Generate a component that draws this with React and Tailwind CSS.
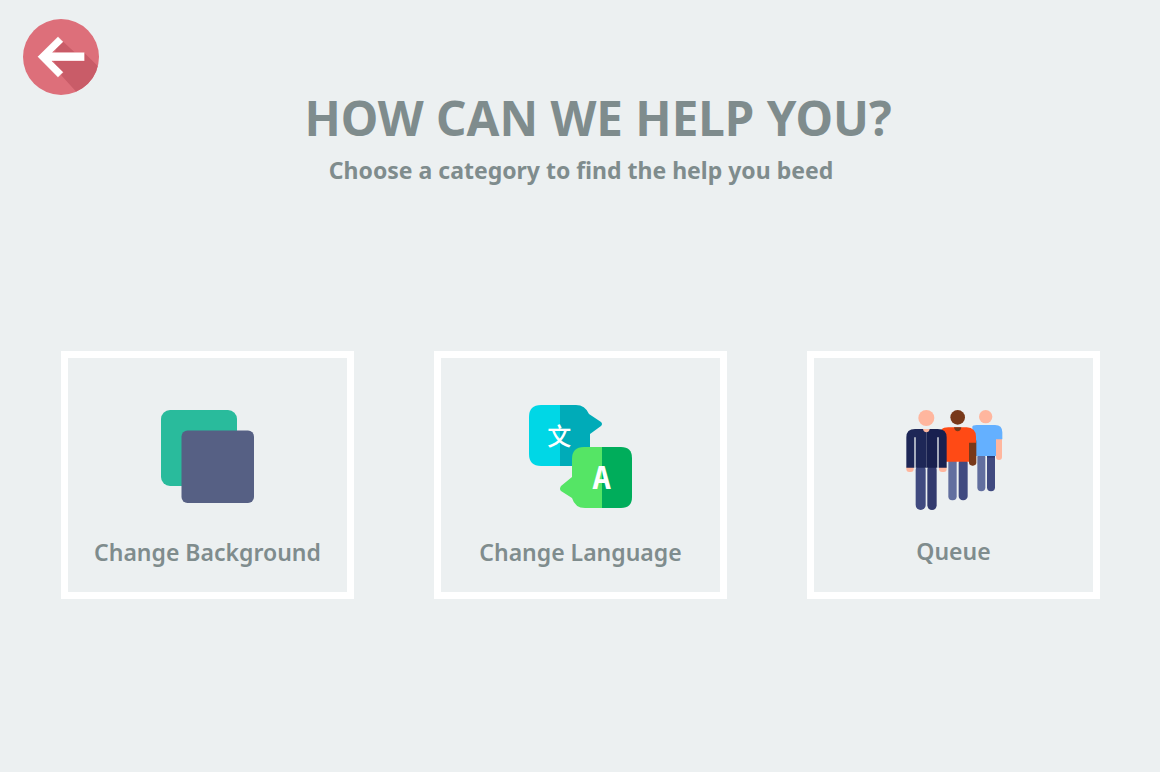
import React from 'react';

const BackIcon = () => (
  <svg viewBox="40 28 226 226" className="w-[76px] h-[76px]">
    <defs>
      <clipPath id="backCircle">
        <circle cx="153" cy="141" r="113" />
      </clipPath>
    </defs>
    <circle cx="153" cy="141" r="113" fill="#dd6f7a" />
    <polygon
      clipPath="url(#backCircle)"
      points="146,83 195,128 222,128 300,205 240,290 155,197 130,150"
      fill="#c95c68"
    />
    <polygon
      points="83,140 144,80 160,96 128,127 223,127 223,153 126,153 160,186 144,202"
      fill="#ffffff"
      stroke="#d9505e"
      strokeWidth="1"
    />
  </svg>
);

const BackgroundIcon = () => (
  <svg viewBox="0 0 93 93" className="w-[93px] h-[93px]">
    <rect x="0" y="0" width="76" height="76" rx="9" fill="#29bb9c" />
    <rect x="20.5" y="20.5" width="72.5" height="72.5" rx="6" fill="#566084" />
  </svg>
);

const TranslateIcon = () => (
  <svg viewBox="0 0 103 103" className="w-[103px] h-[103px]">
    <path d="M31 0H12Q0 0 0 12V49Q0 61 12 61H31Z" fill="#00d7e6" />
    <path d="M31 0H47Q56 0 60 9L72 17Q74 19 72 21L61 29V61H31Z" fill="#00abb8" />
    <path d="M73 42H55Q43 42 43 54V72L32 81Q30 84 32 86L43 93Q46 103 56 103H73Z" fill="#55e565" />
    <path d="M73 42H92Q103 42 103 53V92Q103 103 92 103H73Z" fill="#00ad5b" />
    <text x="30.3" y="40" textAnchor="middle" fontSize="24" fontWeight="500" fill="#ffffff" fontFamily="'Noto Sans CJK SC', sans-serif">文</text>
    <text x="72.7" y="84" textAnchor="middle" fontSize="32" fontWeight="700" fill="#ffffff" fontFamily="'DejaVu Sans Mono', monospace">A</text>
  </svg>
);

const PeopleIcon = () => (
  <svg viewBox="0 0 345 345" className="w-[115px] h-[115px]">
    {/* right person */}
    <circle cx="272" cy="50" r="20" fill="#ffb69e" />
    <rect x="303" y="110" width="18" height="70" rx="9" fill="#ffb69e" />
    <rect x="247" y="160" width="24" height="114" rx="12" fill="#626f9f" />
    <rect x="276" y="160" width="24" height="114" rx="12" fill="#404a80" />
    <path d="M232 80Q232 75 245 75H300Q322 75 322 97V118H303V168H232Z" fill="#64b0ff" />
    <rect x="276" y="168" width="24" height="5" fill="#2f3a70" />
    {/* middle person */}
    <rect x="160" y="175" width="25" height="126" rx="12" fill="#626f9f" />
    <rect x="191" y="175" width="27" height="126" rx="13" fill="#404a80" />
    <rect x="222" y="115" width="22" height="82" rx="10" fill="#78391a" />
    <circle cx="188" cy="52" r="22" fill="#78391a" />
    <path d="M140 88Q145 82 160 82H215Q243 84 243 110V128H222V185H140Z" fill="#ff4a15" />
    <path d="M177 82H199Q197 94 188 94Q179 94 177 82Z" fill="#78391a" />
    {/* left person */}
    <circle cx="94" cy="54" r="24" fill="#ffb69e" />
    <rect x="62" y="195" width="30" height="135" rx="15" fill="#404a80" />
    <rect x="97" y="195" width="28" height="135" rx="14" fill="#323a6e" />
    <rect x="34" y="195" width="22" height="21" rx="9" fill="#ffb69e" />
    <rect x="132" y="195" width="23" height="21" rx="9" fill="#ffb69e" />
    <path d="M34 112Q34 87 60 87H94V203H62V112H58V203H34Z" fill="#1e2757" />
    <path d="M94 87H128Q155 87 155 112V203H131V112H127V203H94Z" fill="#18204f" />
    <path d="M84 87H104Q102 97 94 97Q86 97 84 87Z" fill="#ffb69e" />
  </svg>
);

const categories = [
  { label: 'Change Background', icon: <BackgroundIcon />, iconClass: 'pt-[52px] pr-px', areaClass: 'h-[179px]' },
  { label: 'Change Language', icon: <TranslateIcon />, iconClass: 'pt-[47px] pr-px', areaClass: 'h-[179px]' },
  { label: 'Queue', icon: <PeopleIcon />, iconClass: 'pt-[42px] pr-[2px]', areaClass: 'h-[178px]' },
];

const CategoryCard = ({ category }) => (
  <div className="w-[293px] h-[248px] border-[7px] border-white flex flex-col items-center">
    <div className={`${category.areaClass} ${category.iconClass} shrink-0 flex justify-center`}>{category.icon}</div>
    <p className="text-[23px] leading-[30px] font-semibold text-[#7f8c8d] whitespace-nowrap">{category.label}</p>
  </div>
);

export default function App() {
  return (
    <div className="w-[1160px] h-[772px] overflow-hidden bg-[#ecf0f1] font-['Noto_Sans',sans-serif]">
      <div className="pt-[19px] pl-[23px]">
        <BackIcon />
      </div>
      <h1 className="pl-[36px] text-center text-[47.5px] leading-[46px] font-bold text-[#7f8c8d] whitespace-nowrap">
        HOW CAN WE HELP YOU?
      </h1>
      <p className="mt-[12px] w-[1162px] text-center text-[23px] leading-[34px] font-bold text-[#7f8c8d] whitespace-nowrap">
        Choose a category to find the help you beed
      </p>
      <div className="mt-[164px] pl-[61px] flex gap-[80px]">
        {categories.map((category) => (
          <CategoryCard key={category.label} category={category} />
        ))}
      </div>
    </div>
  );
}
